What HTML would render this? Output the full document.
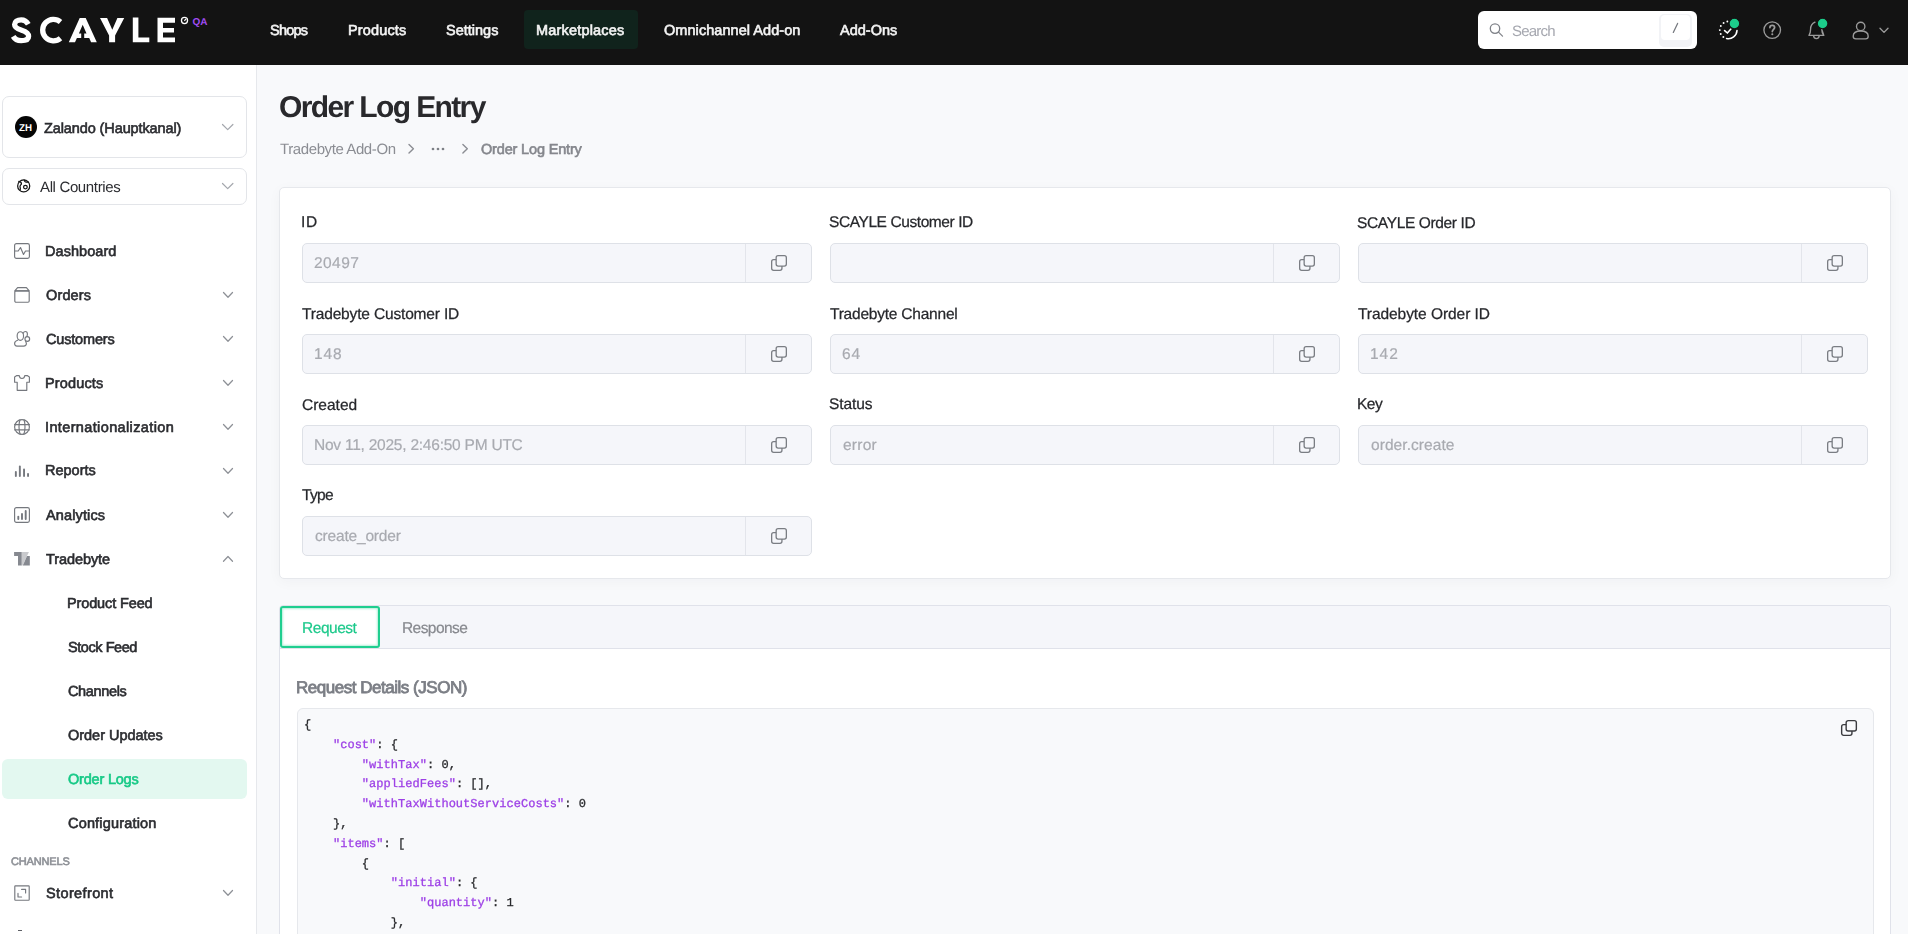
<!DOCTYPE html>
<html><head><meta charset="utf-8"><title>Order Log Entry</title>
<style>
*{box-sizing:border-box}
html,body{margin:0;padding:0}
body{width:1908px;height:934px;overflow:hidden;position:relative;background:#f8f9fb;font-family:'Liberation Sans',sans-serif;text-rendering:geometricPrecision}
.a{position:absolute}
.t{position:absolute;white-space:nowrap;line-height:1;will-change:transform}
svg{position:absolute;overflow:visible}
</style></head><body>
<div class="a" style="left:0;top:0;width:1908px;height:65px;background:#131313"></div>
<div class="a" style="left:524px;top:10px;width:114px;height:39px;background:#10231c;border-radius:4px"></div>
<svg style="left:0;top:0" width="220" height="65" viewBox="0 0 220 65">
<g fill="none" stroke="#fff" stroke-width="5.3" stroke-linecap="butt">
<path d="M28.3 24.2 C26.6 21.2 24.2 19.8 21.2 19.8 C17.2 19.8 14.6 21.8 14.6 24.6 C14.6 28.2 18.4 29.2 21.6 30.2 C25.4 31.4 28.6 32.6 28.6 36.2 C28.6 39.2 25.6 40.6 21.2 40.6 C17.6 40.6 14.8 39.2 13.2 36.4"/>
<path d="M60.5 21.9 A10.8 10.8 0 1 0 60.5 38.3"/>
</g>
<g fill="#fff">
<path d="M68.8 42.3 L79.7 18 L85.7 18 L96.8 42.3 L91.1 42.3 L89.2 38.1 L84.2 38.1 L84.2 33.6 L86.5 33.6 L82.7 24.8 L78.9 33.6 L81.2 33.6 L81.2 38.1 L76.9 38.1 L75 42.3 Z"/>
<path d="M100 18 L107.1 18 L112.3 29.7 L117.4 18 L124.2 18 L115.1 35.5 L115.1 42.3 L109.1 42.3 L109.1 35.5 Z"/>
<path d="M132.8 17.6 L138.4 17.6 L138.4 37.4 L149.3 37.4 L149.3 42.3 L132.8 42.3 Z"/>
<path d="M157.5 17.8 L175 17.8 L175 22.7 L163 22.7 L163 27.9 L174 27.9 L174 32.4 L163 32.4 L163 37.4 L175 37.4 L175 42.3 L157.5 42.3 Z"/>
</g>
<circle cx="184.5" cy="20.5" r="3.05" fill="none" stroke="#fff" stroke-width="1.3"/>
<path d="M184.4 20.8 L185.9 18.9" stroke="#fff" stroke-width="1.2"/>
<text x="192.6" y="25.2" font-family="Liberation Sans" font-weight="700" font-size="10" fill="#a04cf2" letter-spacing="-0.2">QA</text>
</svg>
<div class="a" style="left:1478px;top:11px;width:219px;height:38px;background:#fff;border-radius:6px"></div>
<div class="a" style="left:1659.3px;top:14.1px;width:32.5px;height:32.5px;background:#f2f3f6;border-radius:5px"></div>
<div class="a" style="left:1660.7px;top:15.1px;width:29.7px;height:25px;background:#fff;border-radius:4px"></div>
<svg style="left:1660px;top:14px" width="32" height="30"><path d="M17.6 9.4 L13.3 18.4" stroke="#75787e" stroke-width="1.25" stroke-linecap="round"/></svg>
<svg style="left:1488px;top:22px" width="18" height="18"><circle cx="7" cy="6.6" r="4.7" fill="none" stroke="#7f8288" stroke-width="1.3"/><path d="M10.5 10.1 L14.5 14.1" stroke="#7f8288" stroke-width="1.3" stroke-linecap="round"/></svg>
<svg style="left:1700px;top:0" width="208" height="65">
<g fill="none" stroke="#fff" stroke-width="1.6" stroke-linecap="round">
<path d="M36.99 30.55 A8.6 8.6 0 0 1 26.61 38.51" /><circle cx="23.35" cy="37.06" r="0.95" fill="#fff" stroke="none"/><circle cx="20.74" cy="34.00" r="0.95" fill="#fff" stroke="none"/><circle cx="19.80" cy="30.10" r="0.95" fill="#fff" stroke="none"/><circle cx="20.81" cy="26.06" r="0.95" fill="#fff" stroke="none"/><circle cx="23.59" cy="22.97" r="0.95" fill="#fff" stroke="none"/><circle cx="27.35" cy="21.56" r="0.95" fill="#fff" stroke="none"/><path d="M24.6 30.6 L27.4 33 L30.9 29"/>
</g>
<circle cx="34.4" cy="23.5" r="5.3" fill="#1ccd8b" stroke="#131313" stroke-width="1.1"/>
<g fill="none" stroke="#9b9b9b" stroke-width="1.35" stroke-linecap="round" stroke-linejoin="round">
<circle cx="72.2" cy="30.1" r="8.3"/>
<path d="M69.9 27.5 C69.9 26 71 25.3 72.3 25.3 C73.7 25.3 74.6 26.2 74.6 27.4 C74.6 29.1 72.3 29.5 72.3 31.6" stroke-width="1.75"/>
<path d="M109 35.4 C110 34 110.6 32.6 110.6 29 C110.6 26 112.5 23.4 115 22.2 M120.8 26.4 C121.4 27.4 121.8 28 121.8 29.6 C121.8 32.8 122.6 34.2 123.8 35.4 Z M109 35.4 L123.8 35.4 M113.6 35.6 C113.6 37.4 114.6 38.6 116.4 38.6 C118.2 38.6 119.2 37.4 119.2 35.6"/>
<circle cx="160.7" cy="26.4" r="4.2"/>
<path d="M153.2 36.2 C153.2 32.6 156.4 31 160.7 31 C165 31 168.2 32.6 168.2 36.2 C168.2 38 167.4 38.8 165.6 38.8 L155.8 38.8 C154 38.8 153.2 38 153.2 36.2 Z"/>
<path d="M180 28.2 L184 32.4 L188 28.2"/>
</g>
<circle cx="72.3" cy="34.3" r="1.05" fill="#9b9b9b"/>
<circle cx="122.6" cy="23.5" r="5.3" fill="#1ccd8b" stroke="#131313" stroke-width="1.1"/>
</svg>
<div class="a" style="left:0;top:65px;width:257px;height:869px;background:#fff;border-right:1px solid #e6e8ec"></div>
<div class="a" style="left:2px;top:96px;width:245px;height:62px;border:1px solid #e3e5e9;border-radius:7px;background:#fff"></div>
<div class="a" style="left:15px;top:116px;width:22px;height:22px;border-radius:50%;background:#050505"></div>
<svg style="left:0;top:100px" width="50" height="50"><text x="19.1" y="31" font-family="Liberation Sans" font-weight="700" font-size="10" fill="#fff" textLength="13" lengthAdjust="spacingAndGlyphs">ZH</text></svg>
<div class="a" style="left:2px;top:168px;width:245px;height:37px;border:1px solid #e3e5e9;border-radius:7px;background:#fff"></div>
<svg style="left:16px;top:178px" width="16" height="16" viewBox="0 0 16 16"><g fill="none" stroke="#141414" stroke-width="1.25" stroke-linejoin="round" stroke-linecap="round">
<circle cx="7.7" cy="7.9" r="6.05"/>
<path d="M2.8 3.4 C4.2 3.8 5.6 4.6 5.4 5.8 C5.2 6.8 3.8 7.2 4 8.6 C4.2 9.8 4.6 10.6 4.2 11.8"/>
<path d="M8.3 2.1 C8.2 3.6 9.4 4.4 12.3 4.2"/>
<circle cx="9.4" cy="9.1" r="1.85"/>
</g></svg>
<svg style="left:221.6px;top:123.8px" width="11.4" height="6.2"><path d="M0.5 0.5 L5.7 5.7 L10.9 0.5" fill="none" stroke="#a4a7ad" stroke-width="1.2" stroke-linecap="round" stroke-linejoin="round"/></svg>
<svg style="left:221.6px;top:183.3px" width="11.4" height="6.2"><path d="M0.5 0.5 L5.7 5.7 L10.9 0.5" fill="none" stroke="#a4a7ad" stroke-width="1.2" stroke-linecap="round" stroke-linejoin="round"/></svg>
<svg style="left:14px;top:243px" width="16" height="16" viewBox="0 0 16 16"><g fill="none" stroke="#75787e" stroke-width="1.15" stroke-linejoin="round" stroke-linecap="round"><rect x="0.6" y="0.6" width="14.8" height="14.8" rx="1.8"/><path d="M0.6 8 L4.2 8 L6.5 4.5 L9.5 11.5 L11.5 8 L15.4 8"/></g></svg>
<svg style="left:14px;top:287px" width="16" height="16" viewBox="0 0 16 16"><g fill="none" stroke="#75787e" stroke-width="1.15" stroke-linejoin="round" stroke-linecap="round"><path d="M3.6 0.6 L12.4 0.6 L15.2 3.9 L0.8 3.9 Z"/><rect x="0.8" y="3.9" width="14.4" height="11.3" rx="1.2"/></g></svg>
<svg style="left:14px;top:331px" width="16" height="16" viewBox="0 0 16 16"><g fill="none" stroke="#75787e" stroke-width="1.15" stroke-linejoin="round" stroke-linecap="round"><ellipse cx="6.35" cy="5" rx="3.2" ry="4.3"/><path d="M9.3 2.2 C9.7 1 10.5 0.5 11.4 0.5 C12.7 0.5 13.4 1.6 13.4 3 C13.4 4 13.2 4.8 12.8 5.4"/><circle cx="13.3" cy="7.95" r="2.35"/><path d="M3.6 9.2 C1.6 9.8 0.6 11 0.6 12.6 C0.6 14.3 1.6 15.1 3 15.1 L9.6 15.1 C11.2 15.1 12.4 14.2 12.4 12.6 C12.4 11.8 12.1 11.2 11.6 10.6"/></g></svg>
<svg style="left:14px;top:375px" width="16" height="16" viewBox="0 0 16 16"><g fill="none" stroke="#75787e" stroke-width="1.15" stroke-linejoin="round" stroke-linecap="round"><path d="M5.2 0.5 C5.4 2.4 6.5 3.5 8 3.5 C9.5 3.5 10.6 2.4 10.8 0.5 L13.2 0.6 L15.4 2 L15.4 7.2 L12.8 7.2 L12.8 15.3 L3.2 15.3 L3.2 7.2 L0.6 7.2 L0.6 2 L2.8 0.6 Z"/></g></svg>
<svg style="left:14px;top:418.5px" width="16" height="16" viewBox="0 0 16 16"><g fill="none" stroke="#75787e" stroke-width="1.15" stroke-linejoin="round" stroke-linecap="round"><circle cx="8" cy="8" r="7.4"/><path d="M0.6 5.6 L15.4 5.6 M0.6 10.8 L15.4 10.8"/><path d="M6 0.8 C5.2 3 5 5 5 8 C5 11 5.4 13.2 6.2 15.4 M10 0.8 C10.8 3 11 5 11 8 C11 11 10.6 13.2 9.8 15.4"/></g></svg>
<svg style="left:14px;top:464px" width="16" height="14"><g fill="#75787e"><rect x="0.9" y="7" width="1.9" height="6" rx="0.9"/><rect x="4.9" y="1.5" width="1.9" height="11.5" rx="0.9"/><rect x="9.1" y="4.4" width="1.9" height="8.6" rx="0.9"/><rect x="13.1" y="8.9" width="1.9" height="4.1" rx="0.9"/></g></svg>
<svg style="left:14px;top:507px" width="16" height="16" viewBox="0 0 16 16"><g fill="none" stroke="#75787e" stroke-width="1.15" stroke-linejoin="round" stroke-linecap="round"><rect x="0.6" y="0.6" width="14.8" height="14.8" rx="1.8"/><path d="M4.3 9.6 L4.3 12 M8 7 L8 12 M11.7 4 L11.7 12" stroke-width="1.9"/></g></svg>
<svg style="left:14px;top:552px" width="16" height="14" viewBox="0 0 16 14"><path d="M0.1 0 L7.8 0 L7.8 13.4 L4 13.4 L4 3.9 L0.1 3.9 Z" fill="#868990"/><path d="M7.8 0 L14.9 0 L8.5 13.4 L7.8 13.4 Z" fill="#c9cacd"/><path d="M13 4 L15.8 4 L15.8 13.4 L8.8 13.4 Z" fill="#868990"/></svg>
<svg style="left:14px;top:884.5px" width="16" height="16" viewBox="0 0 16 16"><g fill="none" stroke="#75787e" stroke-width="1.15" stroke-linejoin="round" stroke-linecap="round"><rect x="0.8" y="0.8" width="14.4" height="14.4" rx="0.6"/><path d="M7.6 4.4 L11.6 4.4 L11.6 8 M4 8.4 L4 12 L7.6 12"/></g></svg>
<svg style="left:222.5px;top:292px" width="10" height="5.8"><path d="M0.5 0.5 L5.0 5.3 L9.5 0.5" fill="none" stroke="#8e9197" stroke-width="1.25" stroke-linecap="round" stroke-linejoin="round"/></svg>
<svg style="left:222.5px;top:336px" width="10" height="5.8"><path d="M0.5 0.5 L5.0 5.3 L9.5 0.5" fill="none" stroke="#8e9197" stroke-width="1.25" stroke-linecap="round" stroke-linejoin="round"/></svg>
<svg style="left:222.5px;top:380px" width="10" height="5.8"><path d="M0.5 0.5 L5.0 5.3 L9.5 0.5" fill="none" stroke="#8e9197" stroke-width="1.25" stroke-linecap="round" stroke-linejoin="round"/></svg>
<svg style="left:222.5px;top:424px" width="10" height="5.8"><path d="M0.5 0.5 L5.0 5.3 L9.5 0.5" fill="none" stroke="#8e9197" stroke-width="1.25" stroke-linecap="round" stroke-linejoin="round"/></svg>
<svg style="left:222.5px;top:468px" width="10" height="5.8"><path d="M0.5 0.5 L5.0 5.3 L9.5 0.5" fill="none" stroke="#8e9197" stroke-width="1.25" stroke-linecap="round" stroke-linejoin="round"/></svg>
<svg style="left:222.5px;top:512px" width="10" height="5.8"><path d="M0.5 0.5 L5.0 5.3 L9.5 0.5" fill="none" stroke="#8e9197" stroke-width="1.25" stroke-linecap="round" stroke-linejoin="round"/></svg>
<svg style="left:222.5px;top:556.2px" width="10" height="5.8"><path d="M0.5 5.3 L5.0 0.5 L9.5 5.3" fill="none" stroke="#8e9197" stroke-width="1.25" stroke-linecap="round" stroke-linejoin="round"/></svg>
<svg style="left:222.5px;top:890.2px" width="10" height="5.8"><path d="M0.5 0.5 L5.0 5.3 L9.5 0.5" fill="none" stroke="#8e9197" stroke-width="1.25" stroke-linecap="round" stroke-linejoin="round"/></svg>
<div class="a" style="left:2px;top:759px;width:245px;height:40px;background:#e3f8f0;border-radius:6px"></div>
<div class="a" style="left:18.2px;top:929.8px;width:3.6px;height:1.2px;background:#5d6066"></div>
<svg style="left:406px;top:142px" width="70" height="14"><g fill="none" stroke="#8b8d93" stroke-width="1.4" stroke-linecap="round" stroke-linejoin="round"><path d="M3 2.5 L7.4 6.8 L3 11.1"/><path d="M56.9 2.5 L61.3 6.8 L56.9 11.1"/></g><g fill="#7d8086"><circle cx="27" cy="7" r="1.35"/><circle cx="32" cy="7" r="1.35"/><circle cx="37" cy="7" r="1.35"/></g></svg>
<div class="a" style="left:279px;top:187px;width:1612px;height:392px;background:#fff;border:1px solid #e6e8ec;border-radius:5px;box-shadow:0 3px 14px rgba(20,30,50,0.035)"></div>
<div class="a" style="left:302px;top:243px;width:510px;height:40px;background:#f5f6fa;border:1px solid #dee1e7;border-radius:5px"></div>
<div class="a" style="left:745px;top:244px;width:1px;height:38px;background:#e3e5eb"></div>
<svg style="left:771px;top:255px" width="17" height="17" viewBox="0 0 17 17"><g stroke="#7a7d83" stroke-width="1.3" stroke-linejoin="round"><rect x="0.65" y="4.65" width="10.3" height="10.7" rx="2" fill="none"/><rect x="5.15" y="0.65" width="10.2" height="10.4" rx="2" fill="#f5f6fa"/></g></svg>
<div class="a" style="left:830px;top:243px;width:510px;height:40px;background:#f5f6fa;border:1px solid #dee1e7;border-radius:5px"></div>
<div class="a" style="left:1273px;top:244px;width:1px;height:38px;background:#e3e5eb"></div>
<svg style="left:1299px;top:255px" width="17" height="17" viewBox="0 0 17 17"><g stroke="#7a7d83" stroke-width="1.3" stroke-linejoin="round"><rect x="0.65" y="4.65" width="10.3" height="10.7" rx="2" fill="none"/><rect x="5.15" y="0.65" width="10.2" height="10.4" rx="2" fill="#f5f6fa"/></g></svg>
<div class="a" style="left:1358px;top:243px;width:510px;height:40px;background:#f5f6fa;border:1px solid #dee1e7;border-radius:5px"></div>
<div class="a" style="left:1801px;top:244px;width:1px;height:38px;background:#e3e5eb"></div>
<svg style="left:1827px;top:255px" width="17" height="17" viewBox="0 0 17 17"><g stroke="#7a7d83" stroke-width="1.3" stroke-linejoin="round"><rect x="0.65" y="4.65" width="10.3" height="10.7" rx="2" fill="none"/><rect x="5.15" y="0.65" width="10.2" height="10.4" rx="2" fill="#f5f6fa"/></g></svg>
<div class="a" style="left:302px;top:334px;width:510px;height:40px;background:#f5f6fa;border:1px solid #dee1e7;border-radius:5px"></div>
<div class="a" style="left:745px;top:335px;width:1px;height:38px;background:#e3e5eb"></div>
<svg style="left:771px;top:346px" width="17" height="17" viewBox="0 0 17 17"><g stroke="#7a7d83" stroke-width="1.3" stroke-linejoin="round"><rect x="0.65" y="4.65" width="10.3" height="10.7" rx="2" fill="none"/><rect x="5.15" y="0.65" width="10.2" height="10.4" rx="2" fill="#f5f6fa"/></g></svg>
<div class="a" style="left:830px;top:334px;width:510px;height:40px;background:#f5f6fa;border:1px solid #dee1e7;border-radius:5px"></div>
<div class="a" style="left:1273px;top:335px;width:1px;height:38px;background:#e3e5eb"></div>
<svg style="left:1299px;top:346px" width="17" height="17" viewBox="0 0 17 17"><g stroke="#7a7d83" stroke-width="1.3" stroke-linejoin="round"><rect x="0.65" y="4.65" width="10.3" height="10.7" rx="2" fill="none"/><rect x="5.15" y="0.65" width="10.2" height="10.4" rx="2" fill="#f5f6fa"/></g></svg>
<div class="a" style="left:1358px;top:334px;width:510px;height:40px;background:#f5f6fa;border:1px solid #dee1e7;border-radius:5px"></div>
<div class="a" style="left:1801px;top:335px;width:1px;height:38px;background:#e3e5eb"></div>
<svg style="left:1827px;top:346px" width="17" height="17" viewBox="0 0 17 17"><g stroke="#7a7d83" stroke-width="1.3" stroke-linejoin="round"><rect x="0.65" y="4.65" width="10.3" height="10.7" rx="2" fill="none"/><rect x="5.15" y="0.65" width="10.2" height="10.4" rx="2" fill="#f5f6fa"/></g></svg>
<div class="a" style="left:302px;top:425px;width:510px;height:40px;background:#f5f6fa;border:1px solid #dee1e7;border-radius:5px"></div>
<div class="a" style="left:745px;top:426px;width:1px;height:38px;background:#e3e5eb"></div>
<svg style="left:771px;top:437px" width="17" height="17" viewBox="0 0 17 17"><g stroke="#7a7d83" stroke-width="1.3" stroke-linejoin="round"><rect x="0.65" y="4.65" width="10.3" height="10.7" rx="2" fill="none"/><rect x="5.15" y="0.65" width="10.2" height="10.4" rx="2" fill="#f5f6fa"/></g></svg>
<div class="a" style="left:830px;top:425px;width:510px;height:40px;background:#f5f6fa;border:1px solid #dee1e7;border-radius:5px"></div>
<div class="a" style="left:1273px;top:426px;width:1px;height:38px;background:#e3e5eb"></div>
<svg style="left:1299px;top:437px" width="17" height="17" viewBox="0 0 17 17"><g stroke="#7a7d83" stroke-width="1.3" stroke-linejoin="round"><rect x="0.65" y="4.65" width="10.3" height="10.7" rx="2" fill="none"/><rect x="5.15" y="0.65" width="10.2" height="10.4" rx="2" fill="#f5f6fa"/></g></svg>
<div class="a" style="left:1358px;top:425px;width:510px;height:40px;background:#f5f6fa;border:1px solid #dee1e7;border-radius:5px"></div>
<div class="a" style="left:1801px;top:426px;width:1px;height:38px;background:#e3e5eb"></div>
<svg style="left:1827px;top:437px" width="17" height="17" viewBox="0 0 17 17"><g stroke="#7a7d83" stroke-width="1.3" stroke-linejoin="round"><rect x="0.65" y="4.65" width="10.3" height="10.7" rx="2" fill="none"/><rect x="5.15" y="0.65" width="10.2" height="10.4" rx="2" fill="#f5f6fa"/></g></svg>
<div class="a" style="left:302px;top:516px;width:510px;height:40px;background:#f5f6fa;border:1px solid #dee1e7;border-radius:5px"></div>
<div class="a" style="left:745px;top:517px;width:1px;height:38px;background:#e3e5eb"></div>
<svg style="left:771px;top:528px" width="17" height="17" viewBox="0 0 17 17"><g stroke="#7a7d83" stroke-width="1.3" stroke-linejoin="round"><rect x="0.65" y="4.65" width="10.3" height="10.7" rx="2" fill="none"/><rect x="5.15" y="0.65" width="10.2" height="10.4" rx="2" fill="#f5f6fa"/></g></svg>
<div class="a" style="left:279px;top:605px;width:1612px;height:340px;background:#fff;border:1px solid #e0e2ea;border-radius:4px"></div>
<div class="a" style="left:280px;top:606px;width:1610px;height:43px;background:#f5f6fa;border-bottom:1px solid #e0e2ea;border-radius:4px 4px 0 0"></div>
<div class="a" style="left:280px;top:606px;width:100px;height:42px;background:#fff;border:2px solid #1fce8f;border-radius:3px;box-shadow:inset 0 0 2px 1px rgba(31,206,143,0.35)"></div>
<div class="a" style="left:297px;top:708px;width:1577px;height:260px;background:#f8f9fb;border:1px solid #e6e8ec;border-radius:6px"></div>
<svg style="left:1840.5px;top:719.5px" width="17" height="17" viewBox="0 0 17 17"><g stroke="#3a3b3f" stroke-width="1.4" stroke-linejoin="round"><rect x="0.65" y="4.65" width="10.3" height="10.7" rx="2" fill="none"/><rect x="5.15" y="0.65" width="10.2" height="10.4" rx="2" fill="#f8f9fb"/></g></svg>
<pre class="a" style="will-change:transform;-webkit-text-stroke-width:0.3px;margin:0;left:303.5px;top:715.8px;font-family:'Liberation Mono',monospace;font-size:12px;line-height:19.8px;color:#2a2b2e;letter-spacing:0.03px">{
    <span style="color:#9d40e6">"cost"</span>: {
        <span style="color:#9d40e6">"withTax"</span>: 0,
        <span style="color:#9d40e6">"appliedFees"</span>: [],
        <span style="color:#9d40e6">"withTaxWithoutServiceCosts"</span>: 0
    },
    <span style="color:#9d40e6">"items"</span>: [
        {
            <span style="color:#9d40e6">"initial"</span>: {
                <span style="color:#9d40e6">"quantity"</span>: 1
            },
            <span style="color:#9d40e6">"status"</span>: {</pre>
<div class="t" style="left:270.3px;top:23.8px;font-size:14.5px;font-weight:400;-webkit-text-stroke:0.6px #f4f4f4;color:#f4f4f4;letter-spacing:-0.75px">Shops</div><div class="t" style="left:347.5px;top:23.8px;font-size:14.5px;font-weight:400;-webkit-text-stroke:0.6px #f4f4f4;color:#f4f4f4;letter-spacing:0.143px">Products</div><div class="t" style="left:445.5px;top:23.8px;font-size:14.5px;font-weight:400;-webkit-text-stroke:0.6px #f4f4f4;color:#f4f4f4;letter-spacing:0.0px">Settings</div><div class="t" style="left:536.0px;top:23.8px;font-size:14.5px;font-weight:400;-webkit-text-stroke:0.6px #f4f4f4;color:#f4f4f4;letter-spacing:0.182px">Marketplaces</div><div class="t" style="left:664.0px;top:23.8px;font-size:14.5px;font-weight:400;-webkit-text-stroke:0.6px #f4f4f4;color:#f4f4f4;letter-spacing:0.059px">Omnichannel Add-on</div><div class="t" style="left:840.0px;top:23.8px;font-size:14.5px;font-weight:400;-webkit-text-stroke:0.6px #f4f4f4;color:#f4f4f4;letter-spacing:0.0px">Add-Ons</div><div class="t" style="left:1511.7px;top:24.0px;font-size:15px;font-weight:400;color:#a5a7af;letter-spacing:-0.8px">Search</div><div class="t" style="left:44.0px;top:121.5px;font-size:14.5px;font-weight:400;-webkit-text-stroke:0.6px #2b2c30;color:#2b2c30;letter-spacing:-0.105px">Zalando (Hauptkanal)</div><div class="t" style="left:39.7px;top:180.0px;font-size:15px;font-weight:400;color:#2b2c30;letter-spacing:-0.358px">All Countries</div><div class="t" style="left:45.2px;top:245.0px;font-size:14.5px;font-weight:400;-webkit-text-stroke:0.6px #2b2c30;color:#2b2c30;letter-spacing:0.05px">Dashboard</div><div class="t" style="left:46.2px;top:289.0px;font-size:14.5px;font-weight:400;-webkit-text-stroke:0.6px #2b2c30;color:#2b2c30;letter-spacing:0.14px">Orders</div><div class="t" style="left:46.2px;top:333.0px;font-size:14.5px;font-weight:400;-webkit-text-stroke:0.6px #2b2c30;color:#2b2c30;letter-spacing:-0.175px">Customers</div><div class="t" style="left:45.2px;top:377.0px;font-size:14.5px;font-weight:400;-webkit-text-stroke:0.6px #2b2c30;color:#2b2c30;letter-spacing:0.143px">Products</div><div class="t" style="left:45.2px;top:421.0px;font-size:14.5px;font-weight:400;-webkit-text-stroke:0.6px #2b2c30;color:#2b2c30;letter-spacing:0.368px">Internationalization</div><div class="t" style="left:45.2px;top:464.0px;font-size:14.5px;font-weight:400;-webkit-text-stroke:0.6px #2b2c30;color:#2b2c30;letter-spacing:0.0px">Reports</div><div class="t" style="left:46.2px;top:509.0px;font-size:14.5px;font-weight:400;-webkit-text-stroke:0.6px #2b2c30;color:#2b2c30;letter-spacing:0.125px">Analytics</div><div class="t" style="left:46.2px;top:553.0px;font-size:14.5px;font-weight:400;-webkit-text-stroke:0.6px #2b2c30;color:#2b2c30;letter-spacing:-0.088px">Tradebyte</div><div class="t" style="left:67.2px;top:597.0px;font-size:14.5px;font-weight:400;-webkit-text-stroke:0.6px #2b2c30;color:#2b2c30;letter-spacing:-0.127px">Product Feed</div><div class="t" style="left:68.2px;top:641.0px;font-size:14.5px;font-weight:400;-webkit-text-stroke:0.6px #2b2c30;color:#2b2c30;letter-spacing:-0.444px">Stock Feed</div><div class="t" style="left:68.2px;top:685.0px;font-size:14.5px;font-weight:400;-webkit-text-stroke:0.6px #2b2c30;color:#2b2c30;letter-spacing:-0.357px">Channels</div><div class="t" style="left:68.2px;top:729.0px;font-size:14.5px;font-weight:400;-webkit-text-stroke:0.6px #2b2c30;color:#2b2c30;letter-spacing:-0.025px">Order Updates</div><div class="t" style="left:68.2px;top:773.0px;font-size:14.5px;font-weight:400;-webkit-text-stroke:0.6px #16c986;color:#16c986;letter-spacing:-0.2px">Order Logs</div><div class="t" style="left:68.2px;top:817.0px;font-size:14.5px;font-weight:400;-webkit-text-stroke:0.6px #2b2c30;color:#2b2c30;letter-spacing:0.175px">Configuration</div><div class="t" style="left:10.5px;top:856.5px;font-size:11px;font-weight:400;-webkit-text-stroke:0.6px #8d9096;color:#8d9096;letter-spacing:-0.157px">CHANNELS</div><div class="t" style="left:45.6px;top:887.0px;font-size:14.5px;font-weight:400;-webkit-text-stroke:0.6px #2b2c30;color:#2b2c30;letter-spacing:0.378px">Storefront</div><div class="t" style="left:278.5px;top:92.9px;font-size:30px;font-weight:700;color:#29292c;letter-spacing:-1.621px">Order Log Entry</div><div class="t" style="left:279.5px;top:141.6px;font-size:15px;font-weight:400;color:#8b8d93;letter-spacing:-0.4px">Tradebyte Add-On</div><div class="t" style="left:481.0px;top:142.6px;font-size:14.5px;font-weight:400;-webkit-text-stroke:0.6px #85878d;color:#85878d;letter-spacing:-0.164px">Order Log Entry</div><div class="t" style="left:300.6px;top:214.7px;font-size:15.5px;font-weight:400;-webkit-text-stroke:0.25px #26272b;color:#26272b;letter-spacing:0.6px">ID</div><div class="t" style="left:313.5px;top:255.9px;font-size:15.5px;font-weight:400;-webkit-text-stroke:0.2px #a8aab0;color:#a8aab0;letter-spacing:0.425px">20497</div><div class="t" style="left:828.6px;top:214.7px;font-size:15.5px;font-weight:400;-webkit-text-stroke:0.25px #26272b;color:#26272b;letter-spacing:-0.412px">SCAYLE Customer ID</div><div class="t" style="left:1356.6px;top:215.7px;font-size:15.5px;font-weight:400;-webkit-text-stroke:0.25px #26272b;color:#26272b;letter-spacing:-0.357px">SCAYLE Order ID</div><div class="t" style="left:301.6px;top:306.7px;font-size:15.5px;font-weight:400;-webkit-text-stroke:0.25px #26272b;color:#26272b;letter-spacing:-0.16px">Tradebyte Customer ID</div><div class="t" style="left:313.5px;top:346.9px;font-size:15.5px;font-weight:400;-webkit-text-stroke:0.2px #a8aab0;color:#a8aab0;letter-spacing:0.9px">148</div><div class="t" style="left:829.6px;top:306.7px;font-size:15.5px;font-weight:400;-webkit-text-stroke:0.25px #26272b;color:#26272b;letter-spacing:-0.219px">Tradebyte Channel</div><div class="t" style="left:841.5px;top:346.9px;font-size:15.5px;font-weight:400;-webkit-text-stroke:0.2px #a8aab0;color:#a8aab0;letter-spacing:1.0px">64</div><div class="t" style="left:1357.6px;top:306.7px;font-size:15.5px;font-weight:400;-webkit-text-stroke:0.25px #26272b;color:#26272b;letter-spacing:-0.059px">Tradebyte Order ID</div><div class="t" style="left:1369.5px;top:346.9px;font-size:15.5px;font-weight:400;-webkit-text-stroke:0.2px #a8aab0;color:#a8aab0;letter-spacing:1.0px">142</div><div class="t" style="left:301.6px;top:397.7px;font-size:15.5px;font-weight:400;-webkit-text-stroke:0.25px #26272b;color:#26272b;letter-spacing:0.0px">Created</div><div class="t" style="left:313.5px;top:437.9px;font-size:15.5px;font-weight:400;-webkit-text-stroke:0.2px #a8aab0;color:#a8aab0;letter-spacing:-0.233px">Nov 11, 2025, 2:46:50 PM UTC</div><div class="t" style="left:828.6px;top:396.7px;font-size:15.5px;font-weight:400;-webkit-text-stroke:0.25px #26272b;color:#26272b;letter-spacing:-0.1px">Status</div><div class="t" style="left:842.5px;top:437.7px;font-size:15.5px;font-weight:400;-webkit-text-stroke:0.2px #a8aab0;color:#a8aab0;letter-spacing:0.25px">error</div><div class="t" style="left:1356.6px;top:396.7px;font-size:15.5px;font-weight:400;-webkit-text-stroke:0.25px #26272b;color:#26272b;letter-spacing:-0.5px">Key</div><div class="t" style="left:1370.5px;top:437.9px;font-size:15.5px;font-weight:400;-webkit-text-stroke:0.2px #a8aab0;color:#a8aab0;letter-spacing:0.064px">order.create</div><div class="t" style="left:301.6px;top:487.7px;font-size:15.5px;font-weight:400;-webkit-text-stroke:0.25px #26272b;color:#26272b;letter-spacing:-0.667px">Type</div><div class="t" style="left:314.5px;top:528.9px;font-size:15.5px;font-weight:400;-webkit-text-stroke:0.2px #a8aab0;color:#a8aab0;letter-spacing:-0.182px">create_order</div><div class="t" style="left:301.8px;top:621.0px;font-size:15.5px;font-weight:400;-webkit-text-stroke:0.2px #1cc98b;color:#1cc98b;letter-spacing:-0.467px">Request</div><div class="t" style="left:402.0px;top:621.0px;font-size:15.5px;font-weight:400;-webkit-text-stroke:0.2px #86888e;color:#86888e;letter-spacing:-0.571px">Response</div><div class="t" style="left:296.0px;top:679.3px;font-size:17px;font-weight:400;-webkit-text-stroke:0.8px #7b7e85;color:#7b7e85;letter-spacing:-0.476px">Request Details (JSON)</div>
</body></html>
